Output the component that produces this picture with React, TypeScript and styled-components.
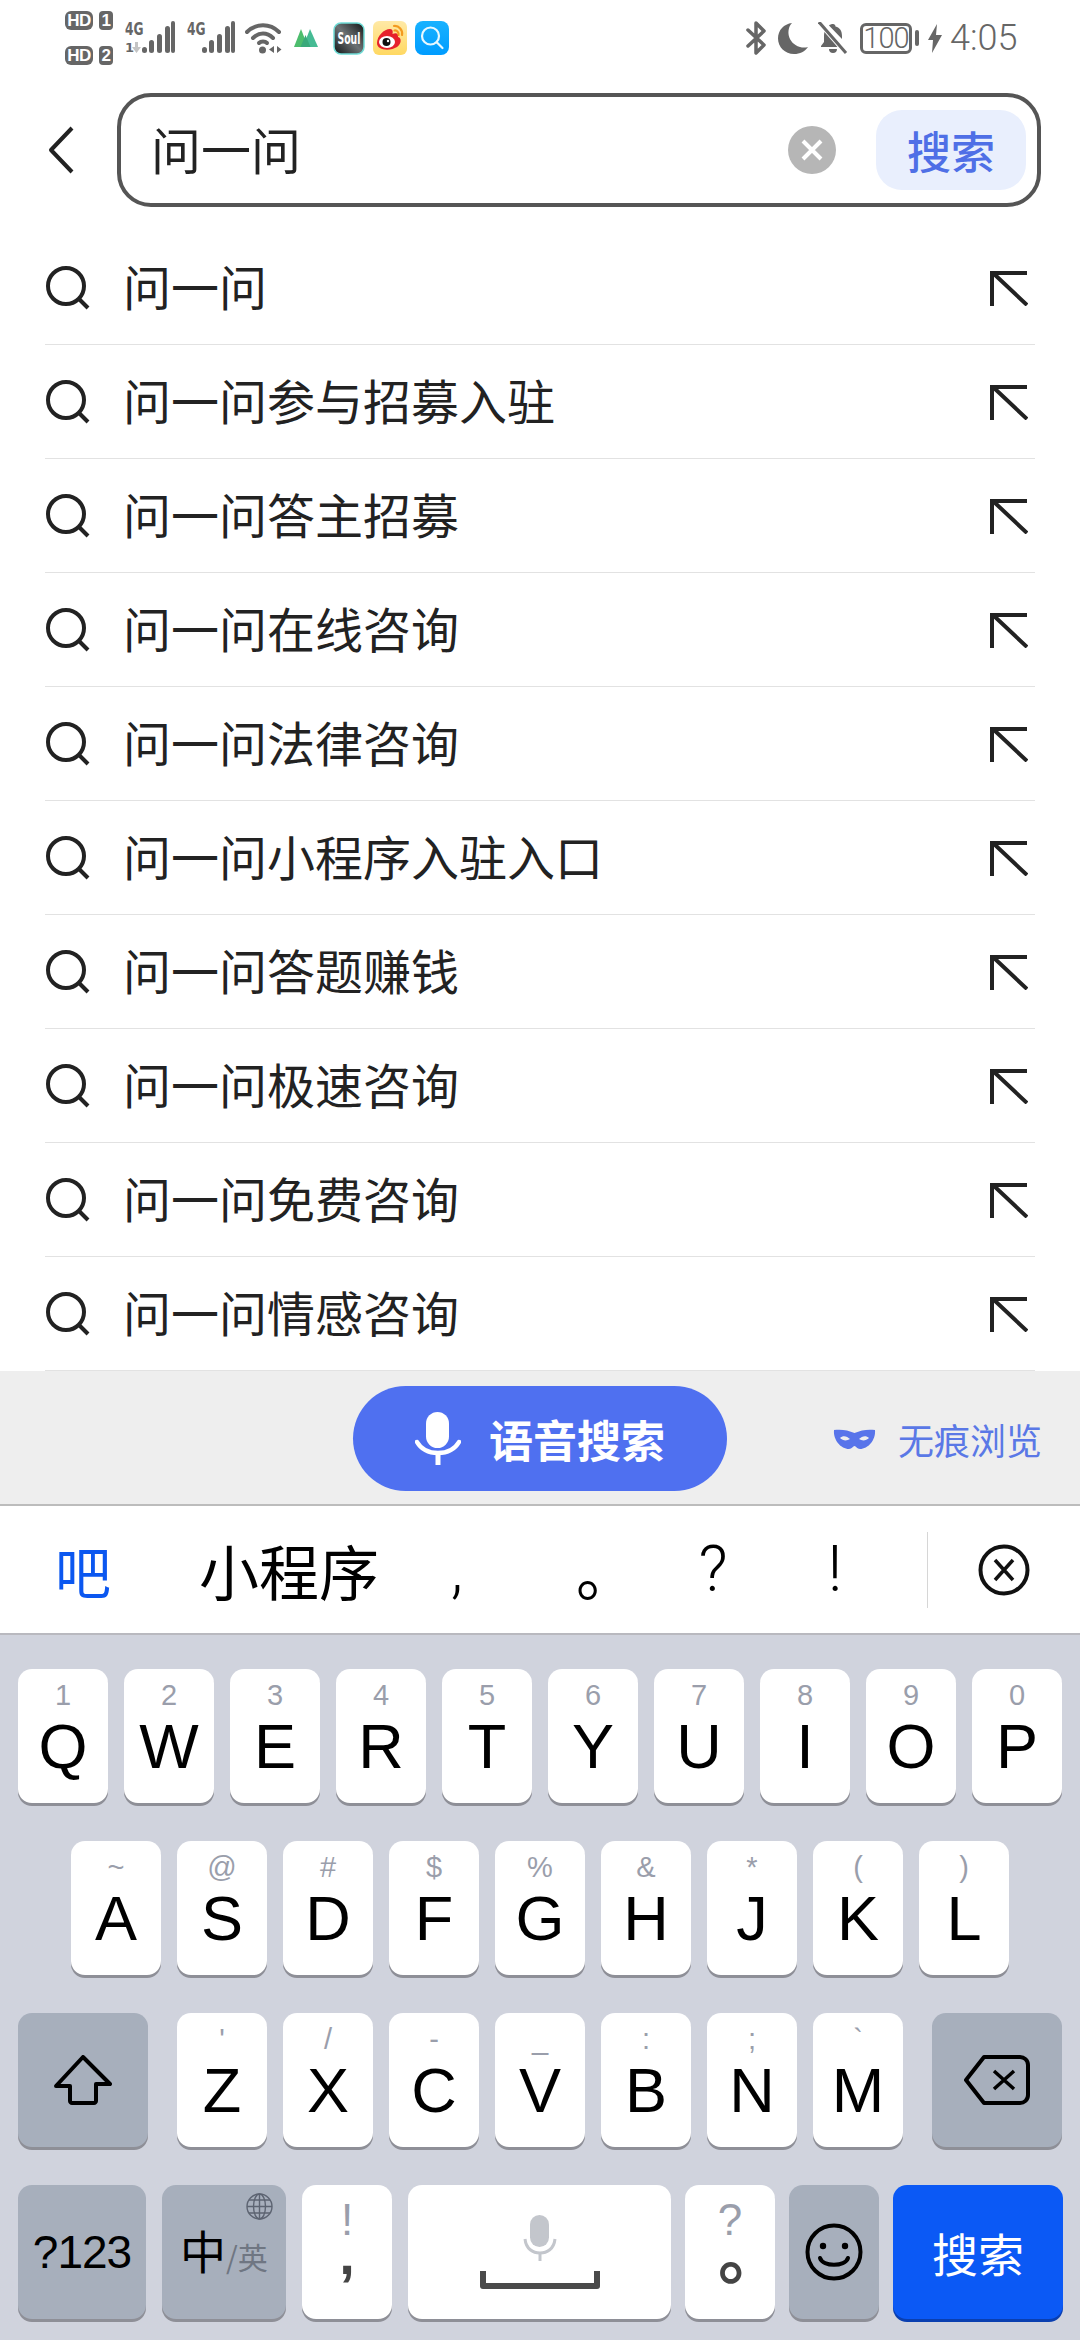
import styled, { createGlobalStyle } from "styled-components";

const GlobalStyle = createGlobalStyle`
  html, body {
    margin: 0;
    padding: 0;
    background: #ffffff;
  }
  * {
    box-sizing: border-box;
  }
`;

const cjk = `"Noto Sans CJK SC", "Noto Sans", sans-serif`;
const latin = `"Liberation Sans", "Noto Sans CJK SC", sans-serif`;

const suggestions = [
  "问一问",
  "问一问参与招募入驻",
  "问一问答主招募",
  "问一问在线咨询",
  "问一问法律咨询",
  "问一问小程序入驻入口",
  "问一问答题赚钱",
  "问一问极速咨询",
  "问一问免费咨询",
  "问一问情感咨询",
];

const rowOne = ["Q1", "W2", "E3", "R4", "T5", "Y6", "U7", "I8", "O9", "P0"];
const rowTwo = ["A~", "S@", "D#", "F$", "G%", "H&", "J*", "K(", "L)"];
const rowThree = ["Z'", "X/", "C-", "V_", "B:", "N;", "M`"];

const SignalBars = ({ label, small }: { label: string; small?: boolean }) => (
  <svg width={small ? 50 : 48} height="46" viewBox={small ? "0 -6 50 46" : "0 -6 48 46"}>
    <text
      transform="translate(0 14) scale(0.68 1)"
      fontFamily="DejaVu Sans"
      fontWeight="700"
      fontSize="18"
      fill="#666"
    >
      {label}
    </text>
    {small && (
      <>
        <text x="0" y="31" fontFamily="DejaVu Sans" fontWeight="700" fontSize="13" fill="#666">
          1
        </text>
        <path d="M9 21h3v5h3l-4.500 6-4.500-6h3z" fill="#c4c4c4" transform="translate(1 0)" />
      </>
    )}
    <g fill="#666" transform={small ? "translate(17 0)" : "translate(15 0)"}>
      <rect x="0" y="26" width="5" height="6" rx="2.500" />
      <rect x="7" y="19" width="5" height="13" rx="2.500" />
      <rect x="15" y="13" width="5" height="19" rx="2.500" />
      <rect x="23" y="5" width="5" height="27" rx="2.500" />
      <rect x="29" y="0" width="4" height="32" rx="2" />
    </g>
  </svg>
);

const WifiIcon = () => (
  <svg width="37" height="32" viewBox="0 0 37 32">
    <g fill="none" stroke="#666" strokeWidth="4" strokeLinecap="round">
      <path d="M2 10C11 1 25 1 34 10" />
      <path d="M8 16C14 10 22 10 28 16" />
      <path d="M14 21C16 19 20 19 22 21" />
    </g>
    <circle cx="17.500" cy="28" r="3.500" fill="#666" />
    <path d="M29 24v7l-5-3.500zM32 24v7l4.500-3.500z" fill="#666" />
  </svg>
);

const GreenMark = () => (
  <svg width="24" height="18" viewBox="0 0 24 18">
    <path d="M7 0l7 18H0z" fill="#4dbd6d" />
    <path d="M16 0l8 18H9z" fill="#46bb94" />
    <path d="M11.500 6l5 12h-10z" fill="#39a97a" />
  </svg>
);

const SoulIcon = () => (
  <svg width="32" height="33" viewBox="0 0 32 33">
    <defs>
      <linearGradient id="soulBg" x1="0" y1="1" x2="1" y2="0">
        <stop offset="0" stopColor="#0f1314" />
        <stop offset="0.5" stopColor="#6c7274" />
        <stop offset="1" stopColor="#111516" />
      </linearGradient>
    </defs>
    <rect x="1" y="1" width="30" height="31" rx="7" fill="url(#soulBg)" stroke="#6fdcd6" strokeWidth="1.500" />
    <text
      transform="translate(4.500 22) scale(0.62 1)"
      fontFamily="DejaVu Sans"
      fontWeight="700"
      fontSize="15"
      fill="#fff"
    >
      Soul
    </text>
  </svg>
);

const WeiboIcon = () => (
  <svg width="34" height="34" viewBox="0 0 34 34">
    <defs>
      <linearGradient id="weiboBg" x1="0" y1="0" x2="0" y2="1">
        <stop offset="0" stopColor="#ffe9a6" />
        <stop offset="1" stopColor="#ffd862" />
      </linearGradient>
    </defs>
    <rect width="34" height="34" rx="6" fill="url(#weiboBg)" />
    <path
      d="M4 22C4 15 11 8 17 8C20 8 20 11 19.500 13C23 11.500 26 12.500 25 16C29 17 28.500 23 24 26C18 30 4 30 4 22Z"
      fill="#e6212b"
    />
    <ellipse cx="14" cy="21" rx="8" ry="6" fill="#fff" />
    <circle cx="13.500" cy="21" r="4" fill="#111" />
    <circle cx="15" cy="20" r="1.200" fill="#fff" />
    <g fill="none" stroke="#f39a1f" strokeWidth="2.200" strokeLinecap="round">
      <path d="M21 5C26 4.500 30 9 29 14" />
      <path d="M21.500 9.500C24 9 26 11.500 25.500 14" />
    </g>
  </svg>
);

const SearchAppIcon = () => (
  <svg width="34" height="34" viewBox="0 0 34 34">
    <defs>
      <linearGradient id="searchBg" x1="0" y1="0" x2="0" y2="1">
        <stop offset="0" stopColor="#18b2ff" />
        <stop offset="1" stopColor="#009cff" />
      </linearGradient>
    </defs>
    <rect width="34" height="34" rx="8" fill="url(#searchBg)" />
    <circle cx="15.500" cy="15" r="8.500" fill="none" stroke="#e8f8ff" strokeWidth="2.200" />
    <path d="M22 21.500l5.500 5.500" stroke="#e8f8ff" strokeWidth="2.200" strokeLinecap="round" />
  </svg>
);

const BluetoothIcon = () => (
  <svg width="21" height="34" viewBox="0 0 21 34">
    <path
      d="M2 9L18 24L10 32V2L18 10L2 25"
      fill="none"
      stroke="#666"
      strokeWidth="3.500"
      strokeLinejoin="round"
      strokeLinecap="round"
    />
  </svg>
);

const MoonIcon = () => (
  <svg width="30" height="31" viewBox="0 0 30 31">
    <path d="M14 0C8 6 9 20 22 24C25 25 28 24.500 30 24C27 28.500 22 31 16 31C7 31 0 24 0 15.500C0 7 6 1 14 0Z" fill="#666" />
  </svg>
);

const BellOffIcon = () => (
  <svg width="30" height="32" viewBox="0 0 30 32">
    <path d="M7 8L23 25H3V24L6 20V14C6 11.500 6.500 9.500 7 8ZM11 3.500L24 17V14C24 9 22 5.500 17.500 4.500C17.500 3 16.500 2 15 2C13.500 2 12 2.500 11 3.500Z" fill="#666" />
    <path d="M11 27H19C19 29.500 17.500 31 15 31C12.500 31 11 29.500 11 27Z" fill="#666" />
    <path d="M2 1L28 31" stroke="#fff" strokeWidth="5" />
    <path d="M1 0L28 31" stroke="#666" strokeWidth="3" />
  </svg>
);

const BoltIcon = () => (
  <svg width="14" height="29" viewBox="0 0 14 29">
    <path d="M9 0L0 16H5L4 29L14 11H8Z" fill="#666" />
  </svg>
);

const BackIcon = () => (
  <svg width="26" height="48" viewBox="0 0 26 48">
    <path d="M24 2L3 24L24 46" fill="none" stroke="#222" strokeWidth="4" strokeLinejoin="round" />
  </svg>
);

const ClearIcon = () => (
  <svg width="48" height="48" viewBox="0 0 48 48">
    <circle cx="24" cy="24" r="24" fill="#b6b6b6" />
    <path d="M15 15L33 33M33 15L15 33" stroke="#fff" strokeWidth="4" />
  </svg>
);

const SearchIcon = () => (
  <svg width="44" height="44" viewBox="0 0 44 44">
    <circle cx="20" cy="20" r="18" fill="none" stroke="#222" strokeWidth="4" />
    <path d="M32 32L42 42" stroke="#222" strokeWidth="4" />
  </svg>
);

const FillArrow = () => (
  <svg width="38" height="36" viewBox="0 0 38 36">
    <path d="M2 36V3H37M3 3L37 35" fill="none" stroke="#222" strokeWidth="4" />
  </svg>
);

const MicIcon = () => (
  <svg width="46" height="54" viewBox="0 0 46 54">
    <rect x="11" y="0" width="23" height="36" rx="11.500" fill="#fff" />
    <path d="M2 30C6 37 14 41 23 41C32 41 40 37 44 30" fill="none" stroke="#fff" strokeWidth="4.500" strokeLinecap="round" />
    <path d="M23 41V53" stroke="#fff" strokeWidth="5" />
  </svg>
);

const MaskIcon = () => (
  <svg width="43" height="20" viewBox="0 0 43 20">
    <path
      fillRule="evenodd"
      d="M1 1C8 0 15 1 21.500 4C28 1 35 0 42 1C43 11 35 20 27 20C24 20 23 17 21.500 17C20 17 19 20 16 20C8 20 0 11 1 1ZM7 9C10 6 14 7 17 10C14 12 10 12 7 9ZM36 9C33 6 29 7 26 10C29 12 33 12 36 9Z"
      fill="#5874ea"
    />
  </svg>
);

const CloseCircle = () => (
  <svg width="52" height="52" viewBox="0 0 52 52">
    <circle cx="26" cy="26" r="23.500" fill="none" stroke="#111" strokeWidth="4" />
    <path d="M17 16L35 36M35 16L17 36" stroke="#111" strokeWidth="3.500" />
  </svg>
);

const ShiftIcon = () => (
  <svg width="58" height="50" viewBox="0 0 58 50">
    <path
      d="M29 2L56 29H42V46C42 47 41 48 40 48H18C17 48 16 47 16 46V31H2Z"
      fill="none"
      stroke="#000"
      strokeWidth="4"
      strokeLinejoin="round"
    />
  </svg>
);

const DeleteIcon = () => (
  <svg width="66" height="50" viewBox="0 0 66 50">
    <path
      d="M20 2H56C60 2 64 5 64 10V40C64 45 60 48 56 48H20L2 25Z"
      fill="none"
      stroke="#000"
      strokeWidth="4"
      strokeLinejoin="round"
    />
    <path d="M30 16L50 34M50 16L30 34" stroke="#000" strokeWidth="3.500" />
  </svg>
);

const GlobeIcon = () => (
  <svg width="27" height="27" viewBox="0 0 27 27">
    <g fill="none" stroke="#5d6472" strokeWidth="1.400">
      <circle cx="13.500" cy="13.500" r="12.500" />
      <ellipse cx="13.500" cy="13.500" rx="6" ry="12.500" />
      <path d="M13.500 1V26M1 13.500H26M3 7H24M3 20H24" />
    </g>
  </svg>
);

const SpaceGlyph = () => (
  <svg width="120" height="74" viewBox="0 0 120 74">
    <rect x="50" y="0" width="19" height="32" rx="9.500" fill="#c3c6cc" />
    <path d="M45 24C46 34 53 38 60 38C67 38 74 34 75 24" fill="none" stroke="#c3c6cc" strokeWidth="3" />
    <path d="M60 38V46" stroke="#c3c6cc" strokeWidth="3" />
    <path d="M3 56V71H117V56" fill="none" stroke="#4a4a4a" strokeWidth="6" strokeLinejoin="round" />
  </svg>
);

const SmileIcon = () => (
  <svg width="58" height="58" viewBox="0 0 58 58">
    <circle cx="29" cy="29" r="26.500" fill="none" stroke="#000" strokeWidth="4" />
    <circle cx="18" cy="23" r="3.200" fill="#000" />
    <circle cx="40" cy="23" r="3.200" fill="#000" />
    <path d="M15 35C18 44 40 44 43 35" fill="none" stroke="#000" strokeWidth="4" strokeLinecap="round" />
  </svg>
);

const LetterKey = ({ code }: { code: string }) => (
  <Key>
    <Hint>{code[1]}</Hint>
    <Letter>{code[0]}</Letter>
  </Key>
);

export default function App() {
  return (
    <Page>
      <GlobalStyle />
      <StatusBar>
        <StatusGroup>
          <SimColumn>
            <SimLine>
              <HdBadge>HD</HdBadge>
              <SimNumber>1</SimNumber>
            </SimLine>
            <SimLine>
              <HdBadge>HD</HdBadge>
              <SimNumber>2</SimNumber>
            </SimLine>
          </SimColumn>
          <Gap $w={12} />
          <SignalBars label="4G" small />
          <Gap $w={12} />
          <SignalBars label="4G" />
          <Gap $w={10} />
          <WifiIcon />
          <Gap $w={12} />
          <GreenMark />
          <Gap $w={15} />
          <SoulIcon />
          <Gap $w={8} />
          <WeiboIcon />
          <Gap $w={8} />
          <SearchAppIcon />
        </StatusGroup>
        <StatusGroup>
          <BluetoothIcon />
          <Gap $w={11} />
          <MoonIcon />
          <Gap $w={10} />
          <BellOffIcon />
          <Gap $w={12} />
          <Battery>100</Battery>
          <BatteryNub />
          <Gap $w={9} />
          <BoltIcon />
          <Gap $w={8} />
          <Clock>4:05</Clock>
        </StatusGroup>
      </StatusBar>

      <SearchRow>
        <BackIcon />
        <SearchBox>
          <SearchText>问一问</SearchText>
          <ClearIcon />
          <SearchButton>搜索</SearchButton>
        </SearchBox>
      </SearchRow>

      <List>
        {suggestions.map((text) => (
          <Row key={text}>
            <SearchIcon />
            <RowText>{text}</RowText>
            <FillArrow />
          </Row>
        ))}
      </List>

      <VoiceBar>
        <VoiceButton>
          <MicIcon />
          <VoiceLabel>语音搜索</VoiceLabel>
        </VoiceButton>
        <Incognito>
          <MaskIcon />
          <IncognitoLabel>无痕浏览</IncognitoLabel>
        </Incognito>
      </VoiceBar>

      <CandidateBar>
        <Candidate $w={166} $size={56} $color="#0b57f0">
          吧
        </Candidate>
        <Candidate $w={246} $size={60}>
          小程序
        </Candidate>
        <Candidate $w={90} $size={64} $thin>
          ,
        </Candidate>
        <Candidate $w={166} $size={60}>
          <FullStop>。</FullStop>
        </Candidate>
        <Candidate $w={90} $size={64} $thin>
          ?
        </Candidate>
        <Candidate $w={154} $size={64} $thin>
          !
        </Candidate>
        <CandidateDivider />
        <CandidateClose>
          <CloseCircle />
        </CandidateClose>
      </CandidateBar>

      <Keyboard>
        <KeyRow>
          {rowOne.map((code) => (
            <LetterKey key={code} code={code} />
          ))}
        </KeyRow>
        <KeyRow $left={71}>
          {rowTwo.map((code) => (
            <LetterKey key={code} code={code} />
          ))}
        </KeyRow>
        <KeyRow>
          <Key $w={130} $tone="gray" $center>
            <ShiftIcon />
          </Key>
          <RowThreeKeys>
            {rowThree.map((code) => (
              <LetterKey key={code} code={code} />
            ))}
          </RowThreeKeys>
          <Key $w={130} $tone="gray" $center>
            <DeleteIcon />
          </Key>
        </KeyRow>
        <KeyRow>
          <Key $w={128} $tone="gray" $center>
            <NumbersLabel>?123</NumbersLabel>
          </Key>
          <LangKey $w={124} $tone="gray" $center>
            <GlobeSlot>
              <GlobeIcon />
            </GlobeSlot>
            <LangMain>中</LangMain>
            <LangSide>/英</LangSide>
          </LangKey>
          <Key>
            <SymbolTop>!</SymbolTop>
            <SymbolBottom>,</SymbolBottom>
          </Key>
          <Key $w={263} $center>
            <SpaceGlyph />
          </Key>
          <Key $ml={-2}>
            <SymbolTop>?</SymbolTop>
            <RingStop>。</RingStop>
          </Key>
          <Key $ml={-2} $tone="gray" $center>
            <SmileIcon />
          </Key>
          <Key $ml={-2} $w={170} $tone="blue" $center>
            <SubmitLabel>搜索</SubmitLabel>
          </Key>
        </KeyRow>
      </Keyboard>
    </Page>
  );
}

const Page = styled.div`
  width: 1080px;
  height: 2340px;
  display: flex;
  flex-direction: column;
  overflow: hidden;
  background: #ffffff;
  font-family: ${cjk};
`;

const StatusBar = styled.div`
  height: 93px;
  padding: 0 66px 17px 65px;
  display: flex;
  justify-content: space-between;
  align-items: center;
`;

const StatusGroup = styled.div`
  display: flex;
  align-items: center;
`;

const Gap = styled.span<{ $w: number }>`
  width: ${(p) => p.$w}px;
  flex: none;
`;

const SimColumn = styled.div`
  width: 48px;
  display: flex;
  flex-direction: column;
  gap: 16px;
`;

const SimLine = styled.div`
  display: flex;
  justify-content: space-between;
`;

const HdBadge = styled.span`
  width: 28px;
  height: 19px;
  border-radius: 6px;
  background: #666;
  color: #fff;
  font: 700 17px/19px ${latin};
  letter-spacing: -0.5px;
  text-align: center;
`;

const SimNumber = styled(HdBadge)`
  width: 14px;
  border-radius: 4px;
`;

const Battery = styled.div`
  width: 52px;
  height: 31px;
  border: 3px solid #666;
  border-radius: 6px;
  color: #666;
  font: 300 29px/25px Roboto, sans-serif;
  letter-spacing: -1px;
  text-align: center;
`;

const BatteryNub = styled.span`
  width: 4px;
  height: 16px;
  margin-left: 3px;
  border-radius: 2px;
  background: #666;
`;

const Clock = styled.span`
  width: 64px;
  color: #666;
  font: 300 36px/40px Roboto, sans-serif;
  white-space: nowrap;
`;

const SearchRow = styled.div`
  height: 138px;
  padding: 0 39px 24px 48px;
  display: flex;
  align-items: center;
  gap: 43px;
`;

const SearchBox = styled.div`
  flex: 1;
  height: 114px;
  padding: 0 11px 0 30px;
  display: flex;
  align-items: center;
  border: 4px solid #555;
  border-radius: 34px;
`;

const SearchText = styled.div`
  flex: 1;
  padding-bottom: 4px;
  color: #222;
  font-size: 50px;
  line-height: 60px;
`;

const SearchButton = styled.div`
  width: 150px;
  height: 80px;
  margin-left: 40px;
  border-radius: 26px;
  background: #e9effd;
  color: #4f6fe6;
  font-size: 44px;
  line-height: 80px;
  font-weight: 500;
  text-align: center;
`;

const List = styled.div`
  display: flex;
  flex-direction: column;
`;

const Row = styled.div`
  height: 114px;
  margin: 0 45px;
  padding: 0 7px 0 1px;
  display: flex;
  align-items: center;
  border-bottom: 1px solid #e2e2e2;
`;

const RowText = styled.div`
  flex: 1;
  margin-left: 33px;
  padding-bottom: 6px;
  color: #222;
  font-size: 48px;
  line-height: 60px;
`;

const VoiceBar = styled.div`
  height: 135px;
  padding: 2px 0 0 353px;
  display: flex;
  align-items: center;
  background: #eeeeee;
  border-bottom: 2px solid #bcbcbc;
`;

const VoiceButton = styled.div`
  width: 374px;
  height: 105px;
  padding-left: 62px;
  display: flex;
  align-items: center;
  gap: 28px;
  border-radius: 53px;
  background: #4f70f0;
`;

const VoiceLabel = styled.span`
  color: #fff;
  font-size: 44px;
  font-weight: 700;
  line-height: 60px;
`;

const Incognito = styled.div`
  margin-left: 106px;
  display: flex;
  align-items: center;
  gap: 22px;
`;

const IncognitoLabel = styled.span`
  color: #5a78e6;
  font-size: 36px;
  line-height: 50px;
`;

const CandidateBar = styled.div`
  height: 129px;
  display: flex;
  align-items: center;
  border-bottom: 2px solid #b9b9bf;
`;

const Candidate = styled.div<{ $w: number; $size: number; $color?: string; $thin?: boolean }>`
  width: ${(p) => p.$w}px;
  color: ${(p) => p.$color || "#000"};
  font-family: ${(p) => (p.$thin ? `Roboto, sans-serif` : cjk)};
  font-weight: ${(p) => (p.$thin ? 300 : 400)};
  font-size: ${(p) => p.$size}px;
  line-height: 80px;
  text-align: center;
`;

const FullStop = styled.span`
  display: inline-block;
  margin-left: 42px;
`;

const CandidateDivider = styled.div`
  width: 1px;
  height: 76px;
  margin-left: 15px;
  background: #d6d6d6;
`;

const CandidateClose = styled.div`
  flex: 1;
  display: flex;
  justify-content: center;
`;

const Keyboard = styled.div`
  flex: 1;
  padding: 34px 18px 0;
  display: flex;
  flex-direction: column;
  gap: 38px;
  background: #d0d3dd;
`;

const KeyRow = styled.div<{ $left?: number }>`
  height: 134px;
  padding-left: ${(p) => (p.$left ? p.$left - 18 : 0)}px;
  display: flex;
  gap: 16px;
`;

const RowThreeKeys = styled.div`
  margin: 0 13px;
  display: flex;
  gap: 16px;
`;

const toneBg = { white: "#ffffff", gray: "#a7afbc", blue: "#0b59f5" };
const toneEdge = { white: "#8e8f97", gray: "#8e8f97", blue: "#0a3fb0" };

const Key = styled.div<{
  $w?: number;
  $ml?: number;
  $tone?: "white" | "gray" | "blue";
  $center?: boolean;
}>`
  width: ${(p) => p.$w || 90}px;
  height: 134px;
  margin-left: ${(p) => p.$ml || 0}px;
  flex: none;
  padding-top: ${(p) => (p.$center ? 0 : 10)}px;
  display: flex;
  flex-direction: column;
  align-items: center;
  justify-content: ${(p) => (p.$center ? "center" : "flex-start")};
  border-radius: 14px;
  background: ${(p) => toneBg[p.$tone || "white"]};
  box-shadow: 0 3px 0 ${(p) => toneEdge[p.$tone || "white"]};
`;

const Hint = styled.span`
  height: 32px;
  color: #9a9eab;
  font: 400 29px/32px ${latin};
`;

const Letter = styled.span`
  color: #000;
  font: 400 63px/70px ${latin};
`;

const NumbersLabel = styled.span`
  color: #000;
  font: 400 46px/50px ${latin};
  letter-spacing: -1px;
`;

const LangKey = styled(Key)`
  position: relative;
  flex-direction: row;
  align-items: baseline;
  padding-top: 34px;
`;

const GlobeSlot = styled.span`
  position: absolute;
  top: 8px;
  right: 13px;
  display: flex;
`;

const LangMain = styled.span`
  color: #000;
  font-size: 46px;
  line-height: 60px;
`;

const LangSide = styled.span`
  color: #6f7682;
  font-size: 30px;
  line-height: 60px;
`;

const SymbolTop = styled.span`
  height: 54px;
  color: #9a9eab;
  font: 400 44px/50px ${latin};
`;

const SymbolBottom = styled.span`
  color: #444;
  font: 700 56px/12px ${latin};
`;

const RingStop = styled.span`
  margin-left: 42px;
  color: #444;
  font: 700 66px/0 ${cjk};
`;

const SubmitLabel = styled.span`
  color: #fff;
  font-size: 46px;
  line-height: 60px;
`;
